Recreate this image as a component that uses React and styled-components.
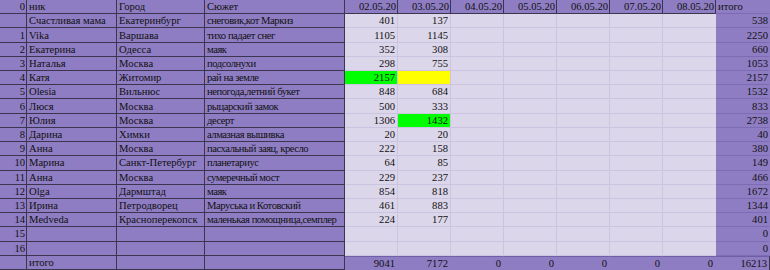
import styled, { createGlobalStyle } from "styled-components";

const GlobalStyle = createGlobalStyle`
  html, body {
    margin: 0;
    padding: 0;
    background: #8e7dc3;
  }
`;

const dates = ["02.05.20", "03.05.20", "04.05.20", "05.05.20", "06.05.20", "07.05.20", "08.05.20"];

const rows = [
  ["", "Счастливая мама", "Екатеринбург", "снеговик,кот Маркиз", 401, 137, 538],
  [1, "Vika", "Варшава", "тихо падает снег", 1105, 1145, 2250],
  [2, "Екатерина", "Одесса", "маяк", 352, 308, 660],
  [3, "Наталья", "Москва", "подсолнухи", 298, 755, 1053],
  [4, "Катя", "Житомир", "рай на земле", 2157, "", 2157, "green", "yellow"],
  [5, "Olesia", "Вильнюс", "непогода,летний букет", 848, 684, 1532],
  [6, "Люся", "Москва", "рыцарский замок", 500, 333, 833],
  [7, "Юлия", "Москва", "десерт", 1306, 1432, 2738, null, "green"],
  [8, "Дарина", "Химки", "алмазная вышивка", 20, 20, 40],
  [9, "Анна", "Москва", "пасхальный заяц, кресло", 222, 158, 380],
  [10, "Марина", "Санкт-Петербург", "планетариус", 64, 85, 149],
  [11, "Анна", "Москва", "сумеречный мост", 229, 237, 466],
  [12, "Olga", "Дармштад", "маяк", 854, 818, 1672],
  [13, "Ирина", "Петродворец", "Маруська и Котовский", 461, 883, 1344],
  [14, "Medveda", "Красноперекопск", "маленькая помощница,семплер", 224, 177, 401],
  [15, "", "", "", "", "", 0],
  [16, "", "", "", "", "", 0],
];

const fills = {
  purple: "#8e7dc3",
  light: "#dcd6ea",
  green: "#00ff00",
  yellow: "#ffff00",
};

const App = () => {
  return (
    <>
      <GlobalStyle />
      <Sheet>
        <Cell $align="right">0</Cell>
        <Cell>ник</Cell>
        <Cell>Город</Cell>
        <Cell>Сюжет</Cell>
        {dates.map((d) => (
          <Cell key={d} $align="right">
            {d}
          </Cell>
        ))}
        <Cell $soft>итого</Cell>

        {rows.map(([idx, nick, city, plot, a, b, total, fillA, fillB]) => (
          <Row key={`${idx}-${nick}`}>
            <Cell $align="right">{idx}</Cell>
            <Cell>{nick}</Cell>
            <Cell>{city}</Cell>
            <Cell $tight>{plot}</Cell>
            <DataCell $fill={fillA}>{a}</DataCell>
            <DataCell $fill={fillB}>{b}</DataCell>
            <DataCell />
            <DataCell />
            <DataCell />
            <DataCell />
            <DataCell $last />
            <Cell $align="right" $soft>
              {total}
            </Cell>
          </Row>
        ))}

        <Cell />
        <Cell>итого</Cell>
        <Cell />
        <Cell />
        <TotalCell>9041</TotalCell>
        <TotalCell>7172</TotalCell>
        <TotalCell>0</TotalCell>
        <TotalCell>0</TotalCell>
        <TotalCell>0</TotalCell>
        <TotalCell>0</TotalCell>
        <TotalCell>0</TotalCell>
        <TotalCell $end>16213</TotalCell>
      </Sheet>
    </>
  );
};

export default App;

const Sheet = styled.div`
  display: grid;
  grid-template-columns: 27px 90px 88px 140px repeat(7, 53px) 1fr;
  grid-template-rows: repeat(19, 1fr);
  width: 770px;
  height: 270px;
  background: ${fills.purple};
  font-family: "Liberation Serif", "Times New Roman", serif;
  font-size: 10.6px;
  color: #111;
  overflow: hidden;
`;

const Row = styled.div`
  display: contents;
`;

const Cell = styled.div`
  display: flex;
  align-items: center;
  justify-content: ${(p) => (p.$align === "right" ? "flex-end" : "flex-start")};
  padding: 0 1px 0 2px;
  background: ${fills.purple};
  border-right: 1px solid ${(p) => (p.$soft ? "transparent" : "#3b3550")};
  border-bottom: 1px solid ${(p) => (p.$soft ? "#7d6cb4" : "#3b3550")};
  letter-spacing: ${(p) => (p.$tight ? "-0.45px" : "normal")};
  white-space: nowrap;
  overflow: hidden;
  min-width: 0;
`;

const DataCell = styled.div`
  display: flex;
  align-items: center;
  justify-content: flex-end;
  padding: 0 2px;
  background: ${(p) => fills[p.$fill] || fills.light};
  border-right: 1px solid ${(p) => (p.$last ? "transparent" : "#cbc3df")};
  border-bottom: 1px solid #cbc3df;
  white-space: nowrap;
  overflow: hidden;
`;

const TotalCell = styled.div`
  display: flex;
  align-items: center;
  justify-content: flex-end;
  padding: 0 2px;
  background: ${fills.purple};
  border-top: 1px solid #6f5fa8;
  border-right: 1px solid ${(p) => (p.$end ? "#3b3550" : "transparent")};
  white-space: nowrap;
`;
